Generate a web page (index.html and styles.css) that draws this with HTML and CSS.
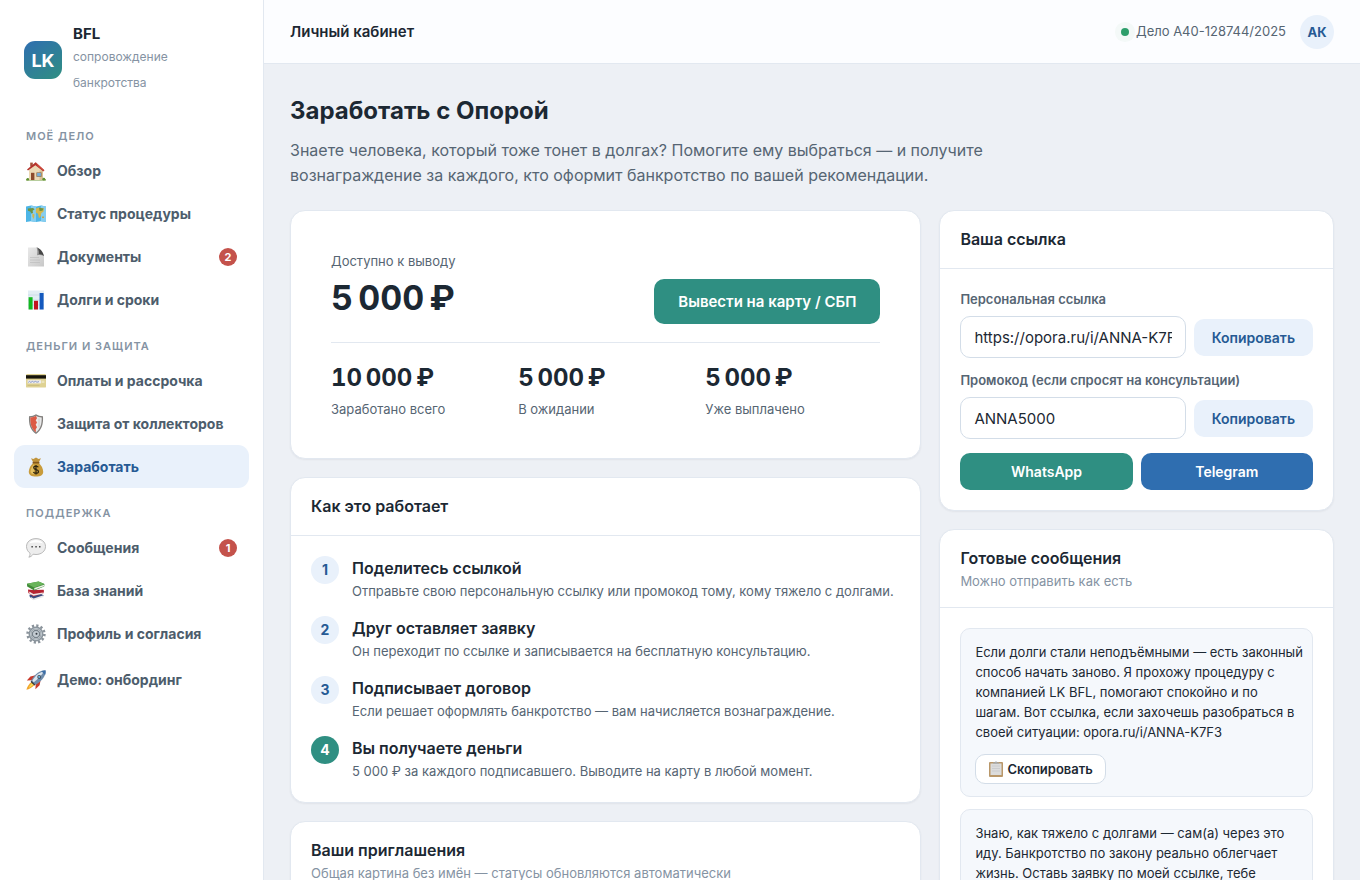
FILE: index.html
```html
<!DOCTYPE html>
<html lang="ru">
<head>
    <meta charset="UTF-8">
    <meta name="viewport" content="width=device-width, initial-scale=1.0">
    <title>Личный кабинет</title>
    <link rel="stylesheet" href="styles.css">
</head>
<body>

<div class="app">
    <aside class="sidebar">
        <div class="brand">
            <div class="brand-logo">LK</div>
            <div class="brand-text">
                <div class="brand-name">BFL</div>
                <div class="brand-sub">сопровождение банкротства</div>
            </div>
        </div>

        <nav>
            <div class="nav-label">Моё дело</div>
            <a class="nav-item" href="#overview">
                <svg class="nav-icon" viewBox="0 0 20 20">
                    <path d="M0 18.3h20v1.2H0z" fill="#6f9a3a"/>
                    <path d="M3 8.5 9.8 3l7.2 6v10H3z" fill="#ecd9b4"/>
                    <path d="M13.5 9.5H17V19h-3.5z" fill="#d9c195"/>
                    <path d="M4.2 1.6h2.6v4H4.2z" fill="#a85238"/>
                    <path d="M9.6 1.2 1 8.6l1 1 7.4-5.4 8 6.2 1-1.2z" fill="#b3322c"/>
                    <path d="m9.6 1.2 8.8 8-1 .6-5.4-4z" fill="#cf4a3c"/>
                    <path d="M5 11.8h3.4V19H5z" fill="#8c4a2c"/>
                    <path d="M10.4 11.4h5.2v4.4h-5.2z" fill="#8a6a4e"/>
                    <path d="M11.1 12h3.8v3.2h-3.8z" fill="#77aed8"/>
                    <circle cx="1.8" cy="18.2" r="1.3" fill="#5f8f31"/>
                    <circle cx="17.8" cy="18.2" r="1.4" fill="#5f8f31"/>
                </svg>
                <span>Обзор</span>
            </a>
            <a class="nav-item" href="#status">
                <svg class="nav-icon" viewBox="0 0 20 20">
                    <path d="M0 2.5 5 1.6l5 1 5-1 5 .9V18l-5-.8-5 .9-5-.9-5 .8z" fill="#4db5e6"/>
                    <path d="M5 1.6l5 1v15.5l-5-.9zM15 1.6l5 .9V18l-5-.8z" fill="#86cdef"/>
                    <path d="M1.8 4.6 7 4l1.6 1.2-2 1.6.4 2-1.4 1-1.4-2.4-2.2-.6z" fill="#6f9440"/>
                    <path d="m6.400 9.400 2.200 1.200-.8 4.600-1.400-2.800z" fill="#d5b64a"/>
                    <path d="m10 4.400 3-.8 5 .8-.6 3.400-2 1.200-.8 3.600-1.600 1.600-1-4.400-2.200-1.400z" fill="#d3b74c"/>
                    <path d="m13 3.800 4.600.8-1.200 2.200-2.800.2z" fill="#6f9440"/>
                    <path d="M16 12.400h2v1.600h-2z" fill="#c7a548"/>
                </svg>
                <span>Статус процедуры</span>
            </a>
            <a class="nav-item" href="#documents">
                <svg class="nav-icon" viewBox="0 0 20 20">
                    <defs>
                        <linearGradient id="page" x1="0" y1="0" x2="1" y2="1">
                            <stop offset="0" stop-color="#e9e9e9"/>
                            <stop offset="1" stop-color="#c8c8c8"/>
                        </linearGradient>
                    </defs>
                    <path d="M2 .5h9l7 8v11H2z" fill="url(#page)"/>
                    <path d="M10.500.5c1.200 2.200 1 4.800.6 7.800 2.400-.6 5-.4 6.900.8z" fill="#8b8b8b"/>
                    <path d="M10.500.5C14 1 17 4.500 18 9.100c-1.500-1.500-3-2-5-2.200C13.400 4.500 12.400 2 10.500.5z" fill="#474747"/>
                    <path d="M4 10.500h9M4 13h10M4 15.500h10" stroke="#bdbdbd" stroke-width=".7"/>
                </svg>
                <span>Документы</span>
                <span class="badge">2</span>
            </a>
            <a class="nav-item" href="#debts">
                <svg class="nav-icon" viewBox="0 0 20 20">
                    <path d="M2 .5h16v19H2z" fill="#e2edf4"/>
                    <path d="M2 5h16M2 10h16M2 15h16" stroke="#c5d5e0" stroke-width=".6"/>
                    <path d="M2.600 7.200h4v12.300h-4z" fill="#14b81f"/>
                    <path d="M8 10.800h4v8.700H8z" fill="#c3141f"/>
                    <path d="M13.600 3h4v16.500h-4z" fill="#1459be"/>
                </svg>
                <span>Долги и сроки</span>
            </a>

            <div class="nav-label">Деньги и защита</div>
            <a class="nav-item" href="#payments">
                <svg class="nav-icon" viewBox="0 0 20 20">
                    <rect x="0" y="3" width="20" height="13.600" rx="1.200" fill="#dfd293"/>
                    <path d="M0 4.200h20v3.400H0z" fill="#16140c"/>
                    <path d="M1.600 9.200h13.600v3.200H1.600z" fill="#eeedf0"/>
                    <path d="m2.200 11.400 1.400-1 1.200 1 1.600-1 1.400.8 1.600-.8 1.600.8 2-.6" fill="none" stroke="#7287bb" stroke-width=".8"/>
                    <path d="M15.800 9.600h2.600v2.400h-2.600z" fill="#eae4bd"/>
                    <path d="M1.600 14.300h12" stroke="#b9ab6b" stroke-width=".6"/>
                </svg>
                <span>Оплаты и рассрочка</span>
            </a>
            <a class="nav-item" href="#protection">
                <svg class="nav-icon" viewBox="0 0 20 20">
                    <path d="M3 2.300C6 2.300 8 1.400 10 .3c2 1.100 4 2 7 2 .5 8-1.300 14-7 17.600C4.300 16.300 2.500 10.300 3 2.300z" fill="#83807e"/>
                    <path d="M4.300 3.500C6.500 3.400 8.300 2.700 10 1.800c1.700.9 3.500 1.600 5.700 1.700.2 6.500-1.200 11.500-5.700 14.700C5.500 15 4.100 10 4.300 3.500z" fill="#e9e9e9"/>
                    <path d="M4.300 3.500C6.500 3.400 8.300 2.700 10 1.800l1 2.500-1.300 2L11 8.600l-1.300 2.200 1.300 2.400-1.300 2 .3 3C5.500 15 4.100 10 4.300 3.500z" fill="#dc5a45"/>
                    <path d="M13 4.500v9" stroke="#c9cccf" stroke-width="1"/>
                </svg>
                <span>Защита от коллекторов</span>
            </a>
            <a class="nav-item active" href="#earn" aria-current="page">
                <svg class="nav-icon" viewBox="0 0 20 20">
                    <path d="M5 1.200 7.400 2 10 .6l2.600 1.300L15 1.200l-2.200 4H7.200z" fill="#c1953d"/>
                    <path d="M7.200 6c-2.600 2.400-4.400 5.600-4.400 8.800 0 3.600 2.800 4.700 7.200 4.700s7.200-1.100 7.200-4.700c0-3.200-1.800-6.400-4.400-8.800z" fill="#c89b3b"/>
                    <path d="M8 7.200C6 9.400 4.600 12 4.600 14.400c0 2 1.400 2.600 3.400 2.800z" fill="#e4c163"/>
                    <path d="M6.600 4.800h6.800v1.700H6.600z" fill="#85581c"/>
                    <path d="M12.300 10.300c-.4-.8-1.200-1.200-2.300-1.200-1.400 0-2.300.7-2.300 1.700 0 2.600 4.800 1.200 4.800 3.700 0 1.100-1 1.800-2.500 1.800-1.300 0-2.200-.5-2.600-1.400M10 7.900v9.600" fill="none" stroke="#2b230f" stroke-width="1.200"/>
                </svg>
                <span>Заработать</span>
            </a>

            <div class="nav-label">Поддержка</div>
            <a class="nav-item" href="#messages">
                <svg class="nav-icon" viewBox="0 0 20 20">
                    <path d="M10 .6c5.400 0 9.500 3.300 9.500 7.900s-4.100 8-9.500 8c-1 0-2-.1-2.900-.3-1 1.600-2.600 2.800-4.300 3 .9-1 1.300-2.500 1.200-4C1.800 13.600.5 11.200.5 8.500.5 3.900 4.600.6 10 .6z" fill="#ededed" stroke="#a9a9a9" stroke-width=".8"/>
                    <path d="M3 5.600C4.400 3.200 7 2 10 2s5.600 1.200 7 3.600c-4-1.400-10-1.400-14 0z" fill="#fff"/>
                    <path d="M5.400 8h1.500v1.500H5.400zM9.300 8h1.500v1.500H9.300zM13 8h1.500v1.500H13z" fill="#4b4b4b"/>
                </svg>
                <span>Сообщения</span>
                <span class="badge">1</span>
            </a>
            <a class="nav-item" href="#knowledge">
                <svg class="nav-icon" viewBox="0 0 20 20">
                    <path d="m3.400 13.800 10.800-1.300 3.800 2-10.600 4.200-3.600-2.600z" fill="#3b4a80"/>
                    <path d="m5 16 2.600 1.600 9.900-3.400.1 1.800-9.800 3.200-2.600-1.400z" fill="#ebebeb"/>
                    <path d="m2 8.400 5 .6 10.600-.2.400 1.200-.6 2.200-10 3.200L2.400 12z" fill="#b52231"/>
                    <path d="M3.200 10.600 7.400 13l9.400-1.600v1.300l-9.200 2.100-4.400-2.400z" fill="#f0e6e4"/>
                    <path d="M1 2.800 12.600.4 18.400 3l-.2 2.400-10 4-7-4z" fill="#3f8b38"/>
                    <path d="M1 2.800 12.600.4 18.400 3 8 6.400z" fill="#69b45a"/>
                    <path d="m8.300 7.100 9.700-3.300v1.400L8.300 8.700z" fill="#edf1e7"/>
                </svg>
                <span>База знаний</span>
            </a>
            <a class="nav-item" href="#profile">
                <svg class="nav-icon" viewBox="0 0 20 20">
                    <circle cx="10" cy="10" r="8.400" fill="none" stroke="#8a939b" stroke-width="2.600" stroke-dasharray="2.200 2.198"/>
                    <circle cx="10" cy="10" r="6" fill="none" stroke="#8b959d" stroke-width="3"/>
                    <circle cx="10" cy="10" r="5.600" fill="none" stroke="#bcc5cc" stroke-width="1"/>
                    <circle cx="10" cy="10" r="4.300" fill="#75808a"/>
                    <circle cx="10" cy="10" r="3" fill="#c3cbd2"/>
                    <circle cx="10.500" cy="9.700" r="1" fill="#353b42"/>
                </svg>
                <span>Профиль и согласия</span>
            </a>
            <a class="nav-item nav-demo" href="#demo">
                <svg class="nav-icon" viewBox="0 0 20 20">
                    <path d="m6.300 11.500 3 3C6.500 17 3 19.500.4 19.800 1 16.800 3.200 13.700 6.300 11.500z" fill="#f2a52b"/>
                    <path d="m6 13 1.600 1.600c-1.600 1.600-3.400 2.800-4.800 3.200.4-1.500 1.600-3.300 3.200-4.800z" fill="#f7dd5a"/>
                    <path d="m9.600 5.200-5.200 1.200-3.600 4.200 5.400-.4zM14.600 10.200l-1 5-4.200 4 .4-5.600z" fill="#c93a2b"/>
                    <path d="M19.600.4c.4 4.600-2.800 10-9.600 14.200l-1.400.2-3.400-3.400.2-1.400C9.400 3.600 14.600 0 19.600.4z" fill="#6f8cab"/>
                    <path d="M18 1.600C13.600 2 9.400 5.600 6.300 10.800l1.500 1.400C11.400 9.600 15 6 18 1.600z" fill="#dbe5ee"/>
                    <path d="M19.600.4c.2 1.700 0 3.200-.5 4.600l-3.900-3.900c1.400-.5 2.900-.8 4.400-.7z" fill="#3c6fa8"/>
                    <path d="m5.400 10.800 4 4-1 .8L4.600 12z" fill="#38393d"/>
                    <circle cx="13.200" cy="6.900" r="1.900" fill="#39434e"/>
                    <circle cx="13.200" cy="6.900" r="1.100" fill="#6cb2dc"/>
                </svg>
                <span>Демо: онбординг</span>
            </a>
        </nav>
    </aside>

    <div class="content">
        <header class="topbar">
            <div class="topbar-title">Личный кабинет</div>
            <div class="topbar-right">
                <div class="case"><span class="case-dot"></span>Дело А40-128744/2025</div>
                <div class="avatar">АК</div>
            </div>
        </header>

        <main class="page">
            <h1>Заработать с Опорой</h1>
            <p class="lead">Знаете человека, который тоже тонет в долгах? Помогите ему выбраться — и получите вознаграждение за каждого, кто оформит банкротство по вашей рекомендации.</p>

            <div class="columns">
                <div class="column">
                    <section class="card balance">
                        <div class="balance-top">
                            <div>
                                <div class="muted">Доступно к выводу</div>
                                <div class="balance-sum">5&thinsp;000&thinsp;₽</div>
                            </div>
                            <button type="button" class="btn btn-green btn-large">Вывести на карту / СБП</button>
                        </div>
                        <div class="stats">
                            <div>
                                <div class="stat-value">10&thinsp;000&thinsp;₽</div>
                                <div class="muted">Заработано всего</div>
                            </div>
                            <div>
                                <div class="stat-value">5&thinsp;000&thinsp;₽</div>
                                <div class="muted">В ожидании</div>
                            </div>
                            <div>
                                <div class="stat-value">5&thinsp;000&thinsp;₽</div>
                                <div class="muted">Уже выплачено</div>
                            </div>
                        </div>
                    </section>

                    <section class="card">
                        <div class="card-head">
                            <h2>Как это работает</h2>
                        </div>
                        <ol class="card-body steps">
                            <li class="step">
                                <span class="step-num">1</span>
                                <div>
                                    <h3>Поделитесь ссылкой</h3>
                                    <p class="muted">Отправьте свою персональную ссылку или промокод тому, кому тяжело с долгами.</p>
                                </div>
                            </li>
                            <li class="step">
                                <span class="step-num">2</span>
                                <div>
                                    <h3>Друг оставляет заявку</h3>
                                    <p class="muted">Он переходит по ссылке и записывается на бесплатную консультацию.</p>
                                </div>
                            </li>
                            <li class="step">
                                <span class="step-num">3</span>
                                <div>
                                    <h3>Подписывает договор</h3>
                                    <p class="muted">Если решает оформлять банкротство — вам начисляется вознаграждение.</p>
                                </div>
                            </li>
                            <li class="step">
                                <span class="step-num done">4</span>
                                <div>
                                    <h3>Вы получаете деньги</h3>
                                    <p class="muted">5 000 ₽ за каждого подписавшего. Выводите на карту в любой момент.</p>
                                </div>
                            </li>
                        </ol>
                    </section>

                    <section class="card">
                        <div class="card-head">
                            <h2>Ваши приглашения</h2>
                            <p class="card-sub">Общая картина без имён — статусы обновляются автоматически</p>
                        </div>
                    </section>
                </div>

                <div class="column">
                    <section class="card">
                        <div class="card-head">
                            <h2>Ваша ссылка</h2>
                        </div>
                        <div class="card-body">
                            <label class="field-label" for="refLink">Персональная ссылка</label>
                            <div class="field-row">
                                <input id="refLink" type="text" value="https://opora.ru/i/ANNA-K7F3" readonly>
                                <button type="button" class="btn btn-soft">Копировать</button>
                            </div>
                            <label class="field-label" for="promo">Промокод (если спросят на консультации)</label>
                            <div class="field-row">
                                <input id="promo" type="text" value="ANNA5000" readonly>
                                <button type="button" class="btn btn-soft">Копировать</button>
                            </div>
                            <div class="share">
                                <button type="button" class="btn btn-green">WhatsApp</button>
                                <button type="button" class="btn btn-blue">Telegram</button>
                            </div>
                        </div>
                    </section>

                    <section class="card">
                        <div class="card-head">
                            <h2>Готовые сообщения</h2>
                            <p class="card-sub">Можно отправить как есть</p>
                        </div>
                        <div class="card-body messages">
                            <div class="message">
                                <p>Если долги стали неподъёмными — есть законный способ начать заново. Я прохожу процедуру с компанией LK BFL, помогают спокойно и по шагам. Вот ссылка, если захочешь разобраться в своей ситуации: opora.ru/i/ANNA-K7F3</p>
                                <button type="button" class="btn-copy">
                                    <svg class="copy-icon" viewBox="0 0 16 16">
                                        <rect x="1" y="1" width="14" height="15" rx="1" fill="#b99769"/>
                                        <path d="M2.500 2.500h11v11.500h-11z" fill="#dcdcdc"/>
                                        <path d="M4 5h8M4 7.500h8M4 10h8" stroke="#c6c8ca" stroke-width=".8"/>
                                        <path d="M5 2.800V1.500h1.800L8 0l1.200 1.500H11v1.300z" fill="#a9adb0"/>
                                    </svg>
                                    Скопировать
                                </button>
                            </div>
                            <div class="message">
                                <p>Знаю, как тяжело с долгами — сам(а) через это иду. Банкротство по закону реально облегчает жизнь. Оставь заявку по моей ссылке, тебе</p>
                            </div>
                        </div>
                    </section>
                </div>
            </div>
        </main>
    </div>
</div>

</body>
</html>
```
FILE: styles.css
```css
* {
    box-sizing: border-box;
}

body {
    margin: 0;
    background-color: #edf0f5;
    color: #1c2833;
    font-family: Inter, "Liberation Sans", sans-serif;
    font-size: 16px;
    line-height: 25px;
}

h1, h2, h3, p, ol {
    margin: 0;
    padding: 0;
}

button, input {
    font-family: inherit;
}

.app {
    display: grid;
    grid-template-columns: 264px 1fr;
    min-height: 100vh;
}

/* Боковое меню */
.sidebar {
    position: sticky;
    top: 0;
    height: 100vh;
    padding: 24px 14px;
    background-color: #fff;
    border-right: 1px solid #e2e8f0;
}

.brand {
    display: flex;
    align-items: center;
    gap: 11px;
    padding: 0 10px 15px;
}

.brand-logo {
    display: flex;
    flex-shrink: 0;
    justify-content: center;
    align-items: center;
    width: 38px;
    height: 38px;
    border-radius: 11px;
    background: linear-gradient(145deg, #2f6eb0, #2f8f82);
    color: #fff;
    font-size: 18px;
    font-weight: 700;
}

.brand-name {
    font-size: 15px;
    font-weight: 700;
    line-height: 20px;
}

.brand-sub {
    color: #8593a3;
    font-size: 12px;
    line-height: 26px;
}

.nav-label {
    padding: 17px 12px 4px;
    color: #8593a3;
    font-size: 11px;
    font-weight: 600;
    line-height: 17px;
    letter-spacing: 1px;
    text-transform: uppercase;
}

.nav-item {
    display: flex;
    align-items: center;
    gap: 11px;
    padding: 10px 12px;
    border-radius: 11px;
    color: #4d5d6c;
    font-size: 14px;
    font-weight: 700;
    line-height: 23px;
    text-decoration: none;
}

.nav-item:hover {
    background-color: #f5f8fc;
}

.nav-item.active {
    background-color: #e9f1fb;
    color: #265a94;
}

.nav-demo {
    margin-top: 3px;
}

.nav-icon {
    flex-shrink: 0;
    width: 20px;
    height: 20px;
}

.badge {
    min-width: 18px;
    margin-left: auto;
    border-radius: 9px;
    background-color: #c4524b;
    color: #fff;
    font-size: 11px;
    font-weight: 700;
    line-height: 18px;
    text-align: center;
}

/* Верхняя панель */
.topbar {
    display: flex;
    justify-content: space-between;
    align-items: center;
    height: 64px;
    padding: 0 26px;
    background-color: #fcfdff;
    border-bottom: 1px solid #e2e8f0;
}

.topbar-title {
    font-size: 15px;
    font-weight: 600;
}

.topbar-right {
    display: flex;
    align-items: center;
    gap: 14px;
}

.case {
    display: flex;
    align-items: center;
    gap: 7px;
    color: #566573;
    font-size: 13px;
}

.case-dot {
    width: 8px;
    height: 8px;
    border-radius: 50%;
    background-color: #2e9e6b;
    box-shadow: 0 0 0 6px #f4f9f8;
}

.avatar {
    width: 34px;
    height: 34px;
    border-radius: 50%;
    background-color: #e9f1fb;
    color: #265a94;
    font-size: 13px;
    font-weight: 700;
    line-height: 34px;
    text-align: center;
}

.page {
    padding: 30px 26px;
}

h1 {
    font-size: 24px;
    font-weight: 700;
    line-height: 34px;
}

.lead {
    max-width: 700px;
    margin: 10px 0 22px;
    color: #566573;
}

.columns {
    display: grid;
    grid-template-columns: 1.6fr 1fr;
    align-items: start;
    gap: 18px;
}

.column {
    display: grid;
    gap: 18px;
    min-width: 0;
}

.card {
    min-width: 0;
    background-color: #fff;
    border: 1px solid #e2e8f0;
    border-radius: 15px;
    box-shadow: 0 1px 2px rgba(28, 40, 51, 0.06);
}

.card-head {
    padding: 16px 20px;
    border-bottom: 1px solid #e2e8f0;
}

.card-body {
    padding: 20px;
}

h2 {
    font-size: 16px;
    font-weight: 600;
}

.card-sub {
    color: #8593a3;
    font-size: 13px;
    line-height: 20px;
}

.muted {
    color: #566573;
    font-size: 13px;
    line-height: 21px;
}

/* Баланс */
.balance {
    padding: 40px 40px 38px;
}

.balance-top {
    display: flex;
    justify-content: space-between;
    align-items: flex-end;
    padding-bottom: 18px;
    border-bottom: 1px solid #e2e8f0;
}

.balance-sum {
    margin: 4px 0;
    font-size: 34px;
    font-weight: 700;
    line-height: 44px;
    font-variant-numeric: tabular-nums;
}

.stats {
    display: grid;
    grid-template-columns: repeat(3, 1fr);
    gap: 12px;
    padding-top: 18px;
}

.stat-value {
    margin-bottom: 4px;
    font-size: 24px;
    font-weight: 700;
    line-height: 34px;
    font-variant-numeric: tabular-nums;
}

/* Кнопки */
.btn {
    padding: 0 18px;
    border: none;
    border-radius: 10px;
    font-size: 14px;
    font-weight: 600;
    line-height: 37px;
    cursor: pointer;
}

.btn-large {
    padding: 0 24px;
    font-size: 15px;
    line-height: 45px;
}

.btn-green {
    background-color: #2f8f82;
    color: #fff;
}

.btn-blue {
    background-color: #2f6eb0;
    color: #fff;
}

.btn-soft {
    background-color: #e9f1fb;
    color: #265a94;
}

/* Шаги */
.steps {
    display: grid;
    gap: 14px;
    list-style: none;
}

.step {
    display: flex;
    gap: 13px;
}

.step-num {
    flex-shrink: 0;
    width: 28px;
    height: 28px;
    border-radius: 50%;
    background-color: #e9f1fb;
    color: #265a94;
    font-size: 14px;
    font-weight: 700;
    line-height: 28px;
    text-align: center;
}

.step-num.done {
    background-color: #2f8f82;
    color: #fff;
}

h3 {
    font-size: 16px;
    font-weight: 600;
}

/* Ссылка и промокод */
.field-label {
    display: block;
    margin-bottom: 7px;
    color: #566573;
    font-size: 13px;
    font-weight: 600;
    line-height: 20px;
}

.field-row {
    display: flex;
    align-items: center;
    gap: 8px;
    margin-bottom: 12px;
}

.field-row input {
    flex: 1;
    min-width: 0;
    height: 42px;
    padding: 0 13px;
    border: 1px solid #d3dde8;
    border-radius: 10px;
    background-color: #fff;
    color: #1c2833;
    font-size: 15px;
}

.share {
    display: grid;
    grid-template-columns: 1fr 1fr;
    gap: 8px;
    margin-top: 14px;
}

/* Готовые сообщения */
.messages {
    display: grid;
    gap: 12px;
}

.message {
    padding: 13px 9px 12px 14px;
    border: 1px solid #e2e8f0;
    border-radius: 10px;
    background-color: #f5f8fc;
    font-size: 13px;
    line-height: 20px;
}

.btn-copy {
    display: flex;
    align-items: center;
    gap: 3px;
    height: 30px;
    margin-top: 12px;
    padding: 0 12px;
    border: 1px solid #d3dde8;
    border-radius: 10px;
    background-color: #fff;
    color: #1c2833;
    font-size: 13px;
    font-weight: 600;
    cursor: pointer;
}

.copy-icon {
    width: 16px;
    height: 16px;
}
```
